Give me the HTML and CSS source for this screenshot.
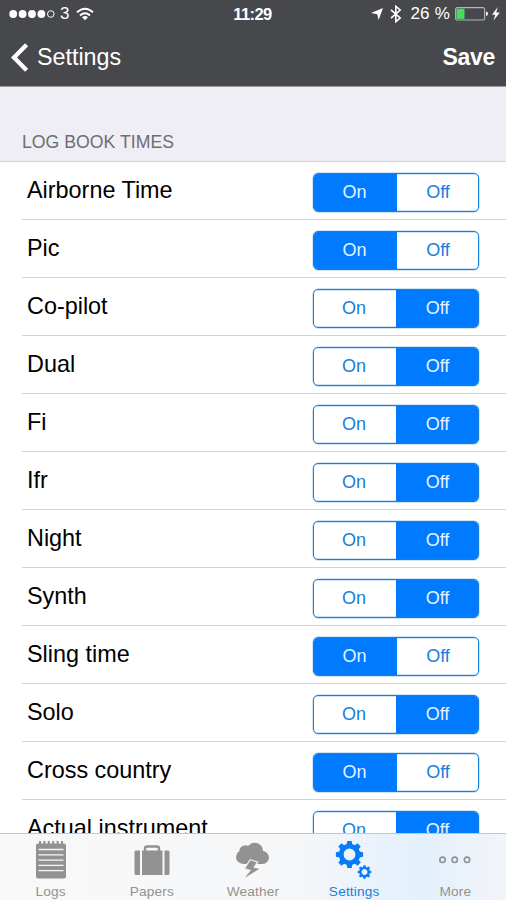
FILE: index.html
```html
<!DOCTYPE html>
<html lang="en">
<head>
<meta charset="utf-8">
<title>Settings</title>
<link rel="stylesheet" href="styles.css">
</head>
<body>
<div class="screen">
  <header class="top">
    <div class="status">
      <div class="status-left">
        <svg class="dots" width="46" height="10" viewBox="0 0 46 10"><g fill="#fff"><circle cx="4.2" cy="5" r="3.9"/><circle cx="13.6" cy="5" r="3.9"/><circle cx="23" cy="5" r="3.9"/><circle cx="32.4" cy="5" r="3.9"/></g><circle cx="41.8" cy="5" r="3.3" fill="none" stroke="#fff"/></svg>
        <span class="carrier">3</span>
        <svg class="wifi" width="18" height="14" viewBox="0 0 18 14"><g fill="none" stroke="#fff" stroke-width="2"><path d="M1 5.2Q9-1.8 17 5.2"/><path d="M4 8.4Q9 4 14 8.4"/></g><path d="M6 10.2Q9 7.8 12 10.2L9 13.3Z" fill="#fff"/></svg>
      </div>
      <span class="clock">11:29</span>
      <div class="status-right">
        <svg class="loc" width="12" height="12" viewBox="0 0 12 12"><path d="M12 0L7.600 12L6.200 6.200L0 4.900Z" fill="#fff"/></svg>
        <svg class="bt" width="12" height="18" viewBox="0 0 12 18"><path d="M1 4.800L10.200 13L5.800 16.700V1.300L10.200 5L1 13.200" fill="none" stroke="#fff" stroke-width="1.600"/></svg>
        <span class="percent">26 %</span>
        <svg class="battery" width="33" height="14" viewBox="0 0 33 14"><rect x=".6" y=".6" width="29" height="12.400" rx="1.600" fill="none" stroke="#b4b4b8" stroke-width="1.100"/><rect x="1.500" y="1.700" width="8" height="10.200" fill="#4cd964"/><path d="M31 4.500Q33 5 33 6.800T31 9.100Z" fill="#fff"/></svg>
        <svg class="bolt" width="8" height="14" viewBox="0 0 8 14"><path d="M5.800 0L0 7.700H3.300L1.500 13.500L7.800 5.400H4.200Z" fill="#fff"/></svg>
      </div>
    </div>
    <nav class="nav">
      <a class="back"><svg width="18" height="29" viewBox="0 0 18 29"><path d="M15.600 1.700L3 14.500L15.600 27.300" fill="none" stroke="#fff" stroke-width="4.300"/></svg><span class="back-label">Settings</span></a>
      <a class="save">Save</a>
    </nav>
  </header>
  <main class="list">
    <h2 class="section">LOG BOOK TIMES</h2>
    <div class="row"><span class="name">Airborne Time</span><div class="toggle"><span class="seg active">On</span><span class="seg">Off</span></div></div>
    <div class="row"><span class="name">Pic</span><div class="toggle"><span class="seg active">On</span><span class="seg">Off</span></div></div>
    <div class="row"><span class="name">Co-pilot</span><div class="toggle"><span class="seg">On</span><span class="seg active">Off</span></div></div>
    <div class="row"><span class="name">Dual</span><div class="toggle"><span class="seg">On</span><span class="seg active">Off</span></div></div>
    <div class="row"><span class="name">Fi</span><div class="toggle"><span class="seg">On</span><span class="seg active">Off</span></div></div>
    <div class="row"><span class="name">Ifr</span><div class="toggle"><span class="seg">On</span><span class="seg active">Off</span></div></div>
    <div class="row"><span class="name">Night</span><div class="toggle"><span class="seg">On</span><span class="seg active">Off</span></div></div>
    <div class="row"><span class="name">Synth</span><div class="toggle"><span class="seg">On</span><span class="seg active">Off</span></div></div>
    <div class="row"><span class="name">Sling time</span><div class="toggle"><span class="seg active">On</span><span class="seg">Off</span></div></div>
    <div class="row"><span class="name">Solo</span><div class="toggle"><span class="seg">On</span><span class="seg active">Off</span></div></div>
    <div class="row"><span class="name">Cross country</span><div class="toggle"><span class="seg active">On</span><span class="seg">Off</span></div></div>
    <div class="row"><span class="name">Actual instrument</span><div class="toggle"><span class="seg">On</span><span class="seg active">Off</span></div></div>
  </main>
  <footer class="tabs">
    <a class="tab">
      <svg width="44" height="46" viewBox="0 0 44 46"><g fill="#929292"><rect x="7" y="9.500" width="30" height="35" rx="2"/><path d="M10 7h2v4h-2zM14.400 7h2v4h-2zM18.800 7h2v4h-2zM23.200 7h2v4h-2zM27.600 7h2v4h-2zM32 7h2v4h-2z"/></g><path d="M9.500 15.500H34.500M9.500 20.800H34.500M9.500 26.100H34.500M9.500 31.400H34.500M9.500 36.700H34.500" stroke="#f7f7f7" stroke-width="1.300"/></svg>
      <span class="tab-label">Logs</span>
    </a>
    <a class="tab">
      <svg width="44" height="46" viewBox="0 0 44 46"><g fill="#929292"><path d="M6 16.500h4V41H6a1.500 1.500 0 0 1-1.500-1.500V18A1.500 1.500 0 0 1 6 16.500zM12 16.500H32.500V41H12zM34.500 16.500H38A1.500 1.500 0 0 1 39.500 18V39.500A1.500 1.500 0 0 1 38 41H34.500z"/></g><path d="M15 17V14.500Q15 12.500 17 12.500H27Q29 12.500 29 14.500V17" fill="none" stroke="#929292" stroke-width="2.400"/></svg>
      <span class="tab-label">Papers</span>
    </a>
    <a class="tab">
      <svg width="44" height="46" viewBox="0 0 44 46"><g fill="#929292"><circle cx="11.800" cy="23" r="6.800"/><circle cx="14.500" cy="17.500" r="6.300"/><circle cx="23.800" cy="17" r="8.300"/><circle cx="31.500" cy="23.500" r="6.500"/><rect x="11.800" y="18" width="20" height="11.900"/></g><path d="M19.500 26.500L14.500 34.300L20.300 36L14.700 43L27.800 35L22 33.700L25.500 28.500Z" fill="none" stroke="#f7f7f7" stroke-width="2.600"/><path d="M19.500 26.500L14.500 34.300L20.300 36L14.700 43L27.800 35L22 33.700L25.500 28.500Z" fill="#929292" stroke="#929292" stroke-width=".4"/></svg>
      <span class="tab-label">Weather</span>
    </a>
    <a class="tab selected">
      <svg width="44" height="46" viewBox="0 0 44 46"><defs><g id="gear"><circle r="8.300" fill="none" stroke="#087cf8" stroke-width="4.800"/><g fill="#087cf8"><path id="tooth" d="M-2.900-9.500L-2.200-13.600H2.200L2.900-9.500Z"/><use href="#tooth" transform="rotate(45)"/><use href="#tooth" transform="rotate(90)"/><use href="#tooth" transform="rotate(135)"/><use href="#tooth" transform="rotate(180)"/><use href="#tooth" transform="rotate(225)"/><use href="#tooth" transform="rotate(270)"/><use href="#tooth" transform="rotate(315)"/></g></g></defs><use href="#gear" transform="translate(17.500 20.500)"/><use href="#gear" transform="translate(32.500 38) scale(.5)"/></svg>
      <span class="tab-label">Settings</span>
    </a>
    <a class="tab">
      <svg width="44" height="46" viewBox="0 0 44 46"><g fill="none" stroke="#929292" stroke-width="1.600"><circle cx="9.500" cy="25.800" r="2.700"/><circle cx="21.700" cy="25.800" r="2.700"/><circle cx="34" cy="25.800" r="2.700"/></g></svg>
      <span class="tab-label">More</span>
    </a>
  </footer>
</div>
</body>
</html>
```
FILE: styles.css
```css
* { box-sizing: border-box; }
body { margin: 0; font-family: "Liberation Sans", Arial, sans-serif; background: #fff; }
svg { display: block; flex: none; }
.screen { width: 506px; height: 900px; display: flex; flex-direction: column; overflow: hidden; }
.top { flex: none; height: 87px; background: #47484c; color: #fff; border-bottom: 1px solid #9b9ba0; }
.status { height: 28px; display: grid; grid-template-columns: 1fr auto 1fr; align-items: center; padding: 0 6px 0 9px; }
.status-left, .status-right { display: flex; align-items: center; }
.status-right { justify-content: flex-end; }
.carrier { font-size: 17px; margin: 0 7px 0 5px; }
.clock { font-size: 16.500px; font-weight: bold; letter-spacing: -0.600px; padding-right: 4px; }
.bt { margin: 0 8px 0 7px; }
.percent { font-size: 17px; margin-right: 5px; white-space: nowrap; letter-spacing: 0.200px; }
.bolt { margin-left: 4px; }
.nav { height: 58px; display: flex; align-items: center; justify-content: space-between; padding: 0 11px 0 11px; }
.back { display: flex; align-items: center; gap: 8px; font-size: 23.300px; }
.save { font-size: 23px; font-weight: bold; letter-spacing: -0.300px; }
.list { flex: 1; min-height: 0; overflow: hidden; }
.section { margin: 0; height: 75px; padding: 44px 22px 0; font-size: 17.700px; font-weight: normal; line-height: 22px; color: #6d6d72; background: #efeef4; border-bottom: 1px solid #d2d2d6; }
.row { height: 58px; margin-left: 22px; padding: 0 27px 0 5px; display: flex; align-items: center; justify-content: space-between; border-bottom: 1px solid #d3d3d6; }
.name { font-size: 23.400px; line-height: 28px; margin-bottom: 2px; color: #000; white-space: nowrap; }
.toggle { width: 166px; height: 39px; margin-top: 3px; display: grid; grid-template-columns: 82px 1fr; border: 1px solid #187edb; border-radius: 5px; overflow: hidden; box-shadow: 0 0 0 0.500px #187edb66; }
.row:has(.seg.active:first-child) .toggle { grid-template-columns: 83px 1fr; }
.seg { display: flex; align-items: center; justify-content: center; font-size: 18px; color: #187edb; box-shadow: inset 0 0.500px #187edb66, inset 0 -0.500px #187edb66; }
.seg:first-child { padding-right: 2px; }
.seg:last-child { padding-left: 1px; }
.seg.active { background: #007aff; color: #e6f2ff; }
.tabs { flex: none; height: 67px; display: grid; grid-template-columns: repeat(5, 1fr); border-top: 1px solid #c6c6c8; background: linear-gradient(90deg, #f8f8f8 0%, #f6f7f8 58%, #ebf3fb 72%, #e3f0fc 84%, #edf3fa 94%, #f2f4f8 100%); }
.tab { display: flex; flex-direction: column; align-items: center; color: #929292; }
.tab-label { font-size: 13.700px; line-height: 16px; margin-top: 4px; letter-spacing: 0.150px; }
.selected { color: #187edb; }
```
